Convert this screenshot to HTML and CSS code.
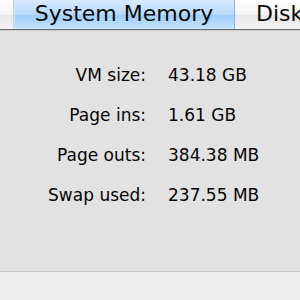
FILE: index.html
```html
<!DOCTYPE html>
<html>
<head>
<meta charset="utf-8">
<link rel="stylesheet" href="styles.css">
</head>
<body>
<div class="window">
  <div class="tabbar">
    <div class="tab tab-left"></div>
    <div class="tab tab-active">System Memory</div>
    <div class="tab tab-right">Disk</div>
  </div>
  <div class="panel">
    <div class="stats">
      <div class="label">VM size:</div><div class="value">43.18 GB</div>
      <div class="label">Page ins:</div><div class="value">1.61 GB</div>
      <div class="label">Page outs:</div><div class="value">384.38 MB</div>
      <div class="label">Swap used:</div><div class="value">237.55 MB</div>
    </div>
  </div>
  <div class="footer"></div>
</div>
</body>
</html>
```
FILE: styles.css
```css
html, body {
  margin: 0;
  padding: 0;
  width: 300px;
  height: 300px;
  overflow: hidden;
  background: #ececec;
}
.window {
  display: flex;
  flex-direction: column;
  width: 300px;
  height: 300px;
  font-family: "DejaVu Sans", "Liberation Sans", sans-serif;
}
.tabbar {
  display: flex;
  height: 29px;
  border-bottom: 1px solid #6f6f6f;
  box-shadow: 0 1px 0 #c9c9c9;
  background: linear-gradient(#ffffff, #f3f3f3 50%, #e8e8e8 51%, #f2f2f2);
  flex: none;
  overflow: hidden;
}
.tab {
  font-size: 22px;
  line-height: 27px;
  color: #0a0a0a;
  white-space: nowrap;
}
.tab-left {
  width: 13px;
  flex: none;
  border-right: 1px solid #cfcfcf;
}
.tab-active {
  width: 220px;
  flex: none;
  text-align: center;
  background: linear-gradient(#d9ebfd, #b7dafc 50%, #9dcdfb 51%, #c4e3fe);
  border-right: 1px solid #8fb4db;
  box-shadow: inset 1px 0 0 #cfe4fb;
}
.tab-right {
  padding-left: 21px;
}
.panel {
  flex: none;
  height: 240px;
  margin-top: 1px;
  background: #e2e2e2;
  border-bottom: 1px solid #c4c4c4;
  box-shadow: 0 1px 0 #d6d6d6;
}
.stats {
  display: grid;
  grid-template-columns: 146px auto;
  column-gap: 22px;
  row-gap: 19px;
  padding-top: 34px;
  font-size: 17px;
  line-height: 21px;
  color: #050505;
}
.label {
  text-align: right;
}
.value {
  text-align: left;
}
.footer {
  flex: 1;
  background: #ececec;
}
```
